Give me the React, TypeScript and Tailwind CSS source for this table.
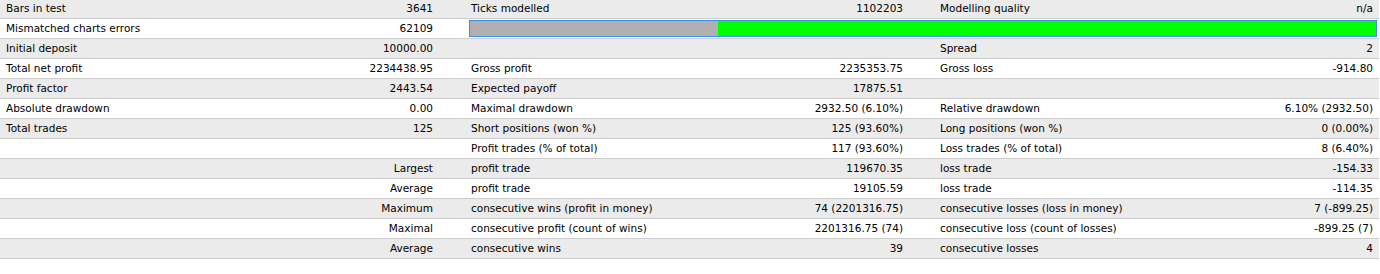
import React from "react"

type Row = [string, string, string, string, string, string]

const rows: Row[] = [
  ["Bars in test", "3641", "Ticks modelled", "1102203", "Modelling quality", "n/a"],
  ["Mismatched charts errors", "62109", "", "", "", ""],
  ["Initial deposit", "10000.00", "", "", "Spread", "2"],
  ["Total net profit", "2234438.95", "Gross profit", "2235353.75", "Gross loss", "-914.80"],
  ["Profit factor", "2443.54", "Expected payoff", "17875.51", "", ""],
  ["Absolute drawdown", "0.00", "Maximal drawdown", "2932.50 (6.10%)", "Relative drawdown", "6.10% (2932.50)"],
  ["Total trades", "125", "Short positions (won %)", "125 (93.60%)", "Long positions (won %)", "0 (0.00%)"],
  ["", "", "Profit trades (% of total)", "117 (93.60%)", "Loss trades (% of total)", "8 (6.40%)"],
  ["", "Largest", "profit trade", "119670.35", "loss trade", "-154.33"],
  ["", "Average", "profit trade", "19105.59", "loss trade", "-114.35"],
  ["", "Maximum", "consecutive wins (profit in money)", "74 (2201316.75)", "consecutive losses (loss in money)", "7 (-899.25)"],
  ["", "Maximal", "consecutive profit (count of wins)", "2201316.75 (74)", "consecutive loss (count of losses)", "-899.25 (7)"],
  ["", "Average", "consecutive wins", "39", "consecutive losses", "4"],
]

function QualityBar() {
  return (
    <div className="col-span-4 ml-[4px] mr-[2px] self-start mt-px flex h-[17px] border border-[#3c8fe8]">
      <div className="w-[248px] bg-[#b0b0b0]" />
      <div className="flex-1 bg-[#00ff00]" />
    </div>
  )
}

export default function App() {
  return (
    <div
      className="h-[274px] w-[1380px] overflow-hidden bg-white text-[10.5px] text-black"
      style={{ fontFamily: '"DejaVu Sans", sans-serif' }}
    >
      <div className="-mt-px w-[1379px]">
        {rows.map((r, i) => (
          <div
            key={i}
            className={`grid h-[20px] grid-cols-[232px_233px_235px_234px_235px_1fr] items-center border-b border-[#cdcdcd] whitespace-nowrap ${
              i % 2 === 0 ? "bg-[#ebebeb]" : "bg-white"
            }`}
          >
            <div className="pl-[6px]">{r[0]}</div>
            <div className="pr-[32px] text-right">{r[1]}</div>
            {i === 1 ? (
              <QualityBar />
            ) : (
              <>
                <div className="pl-[6px]">{r[2]}</div>
                <div className="pr-[31px] text-right">{r[3]}</div>
                <div className="pl-[6px]">{r[4]}</div>
                <div className="pr-[6px] text-right">{r[5]}</div>
              </>
            )}
          </div>
        ))}
      </div>
    </div>
  )
}
